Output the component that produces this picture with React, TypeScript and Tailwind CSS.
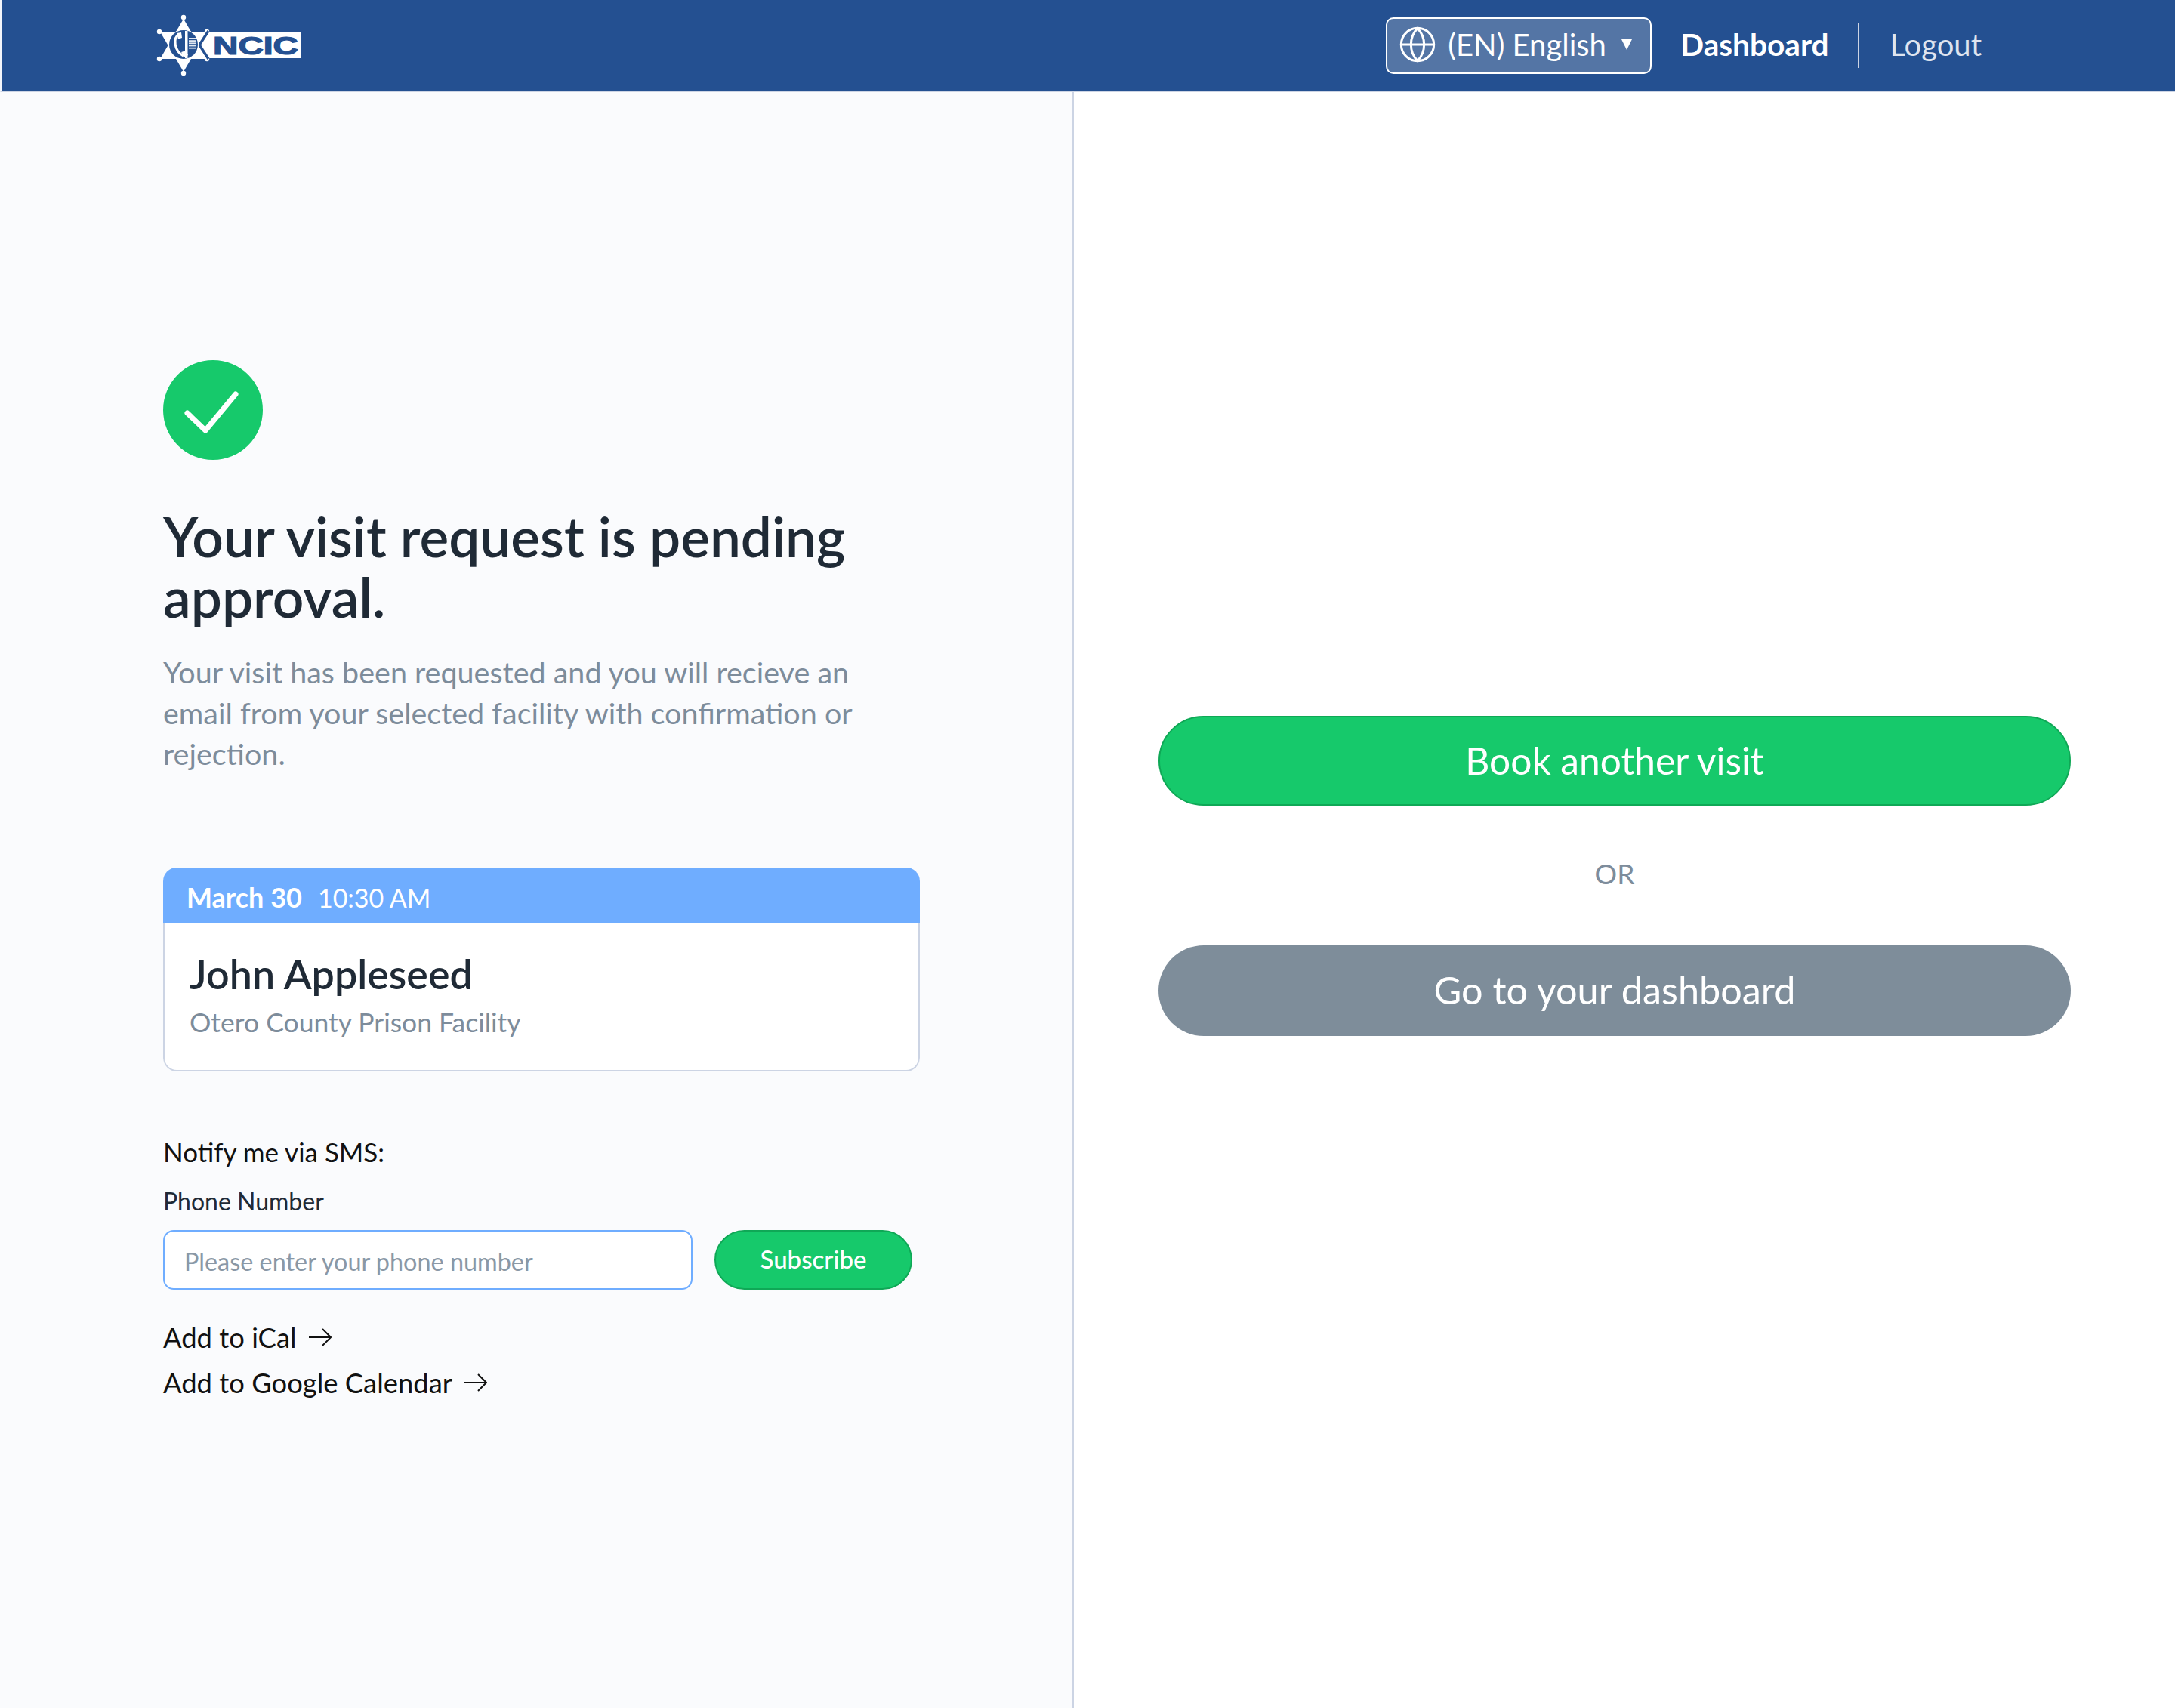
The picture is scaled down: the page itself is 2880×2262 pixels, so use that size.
import { Globe } from "lucide-react";

const NAVY = "#245091";

function Logo() {
  return (
    <svg width="200" height="90" viewBox="200 15 200 90" className="shrink-0">
      <polygon points="243,25 274,78 212,78" fill="#fff" />
      <polygon points="243,95 274,42 212,42" fill="#fff" />
      {[
        [243, 23],
        [243, 97],
        [211, 42],
        [274, 42],
        [211, 78],
        [274, 78],
      ].map(([cx, cy]) => (
        <circle key={`${cx}-${cy}`} cx={cx} cy={cy} r="3.2" fill="#fff" />
      ))}
      <polygon points="277,42 398,42 398,77 277,77 265,59.5" fill="#fff" />
      <polyline points="276,41 264,59.5 276,78" fill="none" stroke={NAVY} strokeWidth="3.5" />
      <circle cx="243" cy="59" r="20" fill="#fff" />
      <circle cx="243" cy="59" r="19" fill={NAVY} />
      <path d="M237 45 C229 50 230 67 243 74" fill="none" stroke="#fff" strokeWidth="3.2" />
      <path d="M234 44 L240 43 L241 50 L236 52 Z M240 69 L246 67 L249 73 L244 76 Z" fill="#fff" />
      <rect x="245" y="41" width="3.5" height="36" fill="#fff" />
      {[0, 1, 2, 3, 4].map((row) => (
        <rect key={row} x="250" y={50 + row * 3.2} width="10" height="1.8" fill="#dfe6f0" />
      ))}
      <text
        x="282"
        y="72"
        textLength="113"
        lengthAdjust="spacingAndGlyphs"
        fontFamily="'Liberation Sans', sans-serif"
        fontWeight="700"
        fontSize="33"
        fill={NAVY}
        stroke={NAVY}
        strokeWidth="1.2"
      >
        NCIC
      </text>
    </svg>
  );
}

function ArrowIcon() {
  return (
    <svg width="30" height="26" viewBox="0 0 30 26" fill="none" stroke="#111" strokeWidth="2" className="shrink-0">
      <path d="M0 13H28" />
      <path d="M18 2L29 13L18 24" />
    </svg>
  );
}

function CalendarLink({ label }: { label: string }) {
  return (
    <a className="flex h-[60px] items-center gap-[16px] text-[36.4px] text-[#111]">
      {label}
      <ArrowIcon />
    </a>
  );
}

export default function App() {
  return (
    <div className="flex min-h-[2262px] w-[2880px] flex-col bg-white font-['Lato',sans-serif]">
      <header className="flex h-[122px] shrink-0 items-center border-b-2 border-l-2 border-b-[#ccd4e4] border-l-[#f4f6fb] bg-[#245091] pr-[256px] pl-[198px]">
        <Logo />
        <div className="ml-auto flex items-center">
          <button className="flex h-[75px] w-[352px] items-center rounded-[10px] border-2 border-white bg-[#5475a5] pb-[2px] pl-[14px] text-[40px] text-white">
            <Globe size={52} strokeWidth={1.4} />
            <span className="ml-[14px]">(EN) English</span>
            <span className="ml-[20px] h-0 w-0 border-x-[7px] border-t-[14px] border-x-transparent border-t-white" />
          </button>
          <a className="ml-[38px] pb-[2px] text-[40.6px] font-bold text-white">Dashboard</a>
          <span className="mr-[41px] ml-[38px] h-[59px] w-[2px] bg-[#ccd4e4]" />
          <a className="pb-[2px] text-[40px] text-[#dfe4ef]">Logout</a>
        </div>
      </header>

      <main className="flex flex-1">
        <section className="w-[1422px] shrink-0 border-r-2 border-r-[#ccd4e4] bg-[#fafbfd] pt-[355px] pl-[216px]">
          <svg width="132" height="132" viewBox="0 0 132 132">
            <circle cx="66" cy="66" r="66" fill="#16c96b" />
            <path d="M32 70L56 93L96 45" fill="none" stroke="#fff" strokeWidth="7" strokeLinecap="round" strokeLinejoin="round" />
          </svg>

          <h1 className="mt-[61px] w-[1000px] text-[73px] leading-[80px] font-semibold text-[#1f2a36]">
            Your visit request is pending approval.
          </h1>
          <p className="mt-[33px] w-[960px] text-[39.5px] leading-[54px] text-[#7d8c9b]">
            Your visit has been requested and you will recieve an email from your selected facility with confirmation or rejection.
          </p>

          <div className="mt-[124px] w-[1002px] overflow-hidden rounded-[18px]">
            <div className="flex h-[74px] items-center gap-[21px] bg-[#6fadff] pt-[4px] pl-[31px] text-white">
              <span className="text-[36px] font-bold">March 30</span>
              <span className="text-[34px]">10:30 AM</span>
            </div>
            <div className="h-[196px] rounded-b-[18px] border-x-2 border-b-2 border-[#ccd4e4] bg-white pt-[36px] pl-[33px]">
              <div className="text-[53.8px] leading-[60px] font-semibold text-[#1f2a36]">John Appleseed</div>
              <div className="mt-[12px] text-[35.5px] leading-[46px] text-[#7d8c9b]">Otero County Prison Facility</div>
            </div>
          </div>

          <div className="mt-[85px] text-[35px] leading-[42px] text-[#111]">Notify me via SMS:</div>
          <label className="mt-[27px] block text-[32px] leading-[36px] text-[#1f2a36]">Phone Number</label>
          <div className="mt-[20px] flex items-center gap-[29px]">
            <input
              className="h-[79px] w-[701px] rounded-[14px] border-2 border-[#6fadff] bg-white px-[26px] pt-[4px] text-[32.4px] placeholder:text-[#8a98a6]"
              placeholder="Please enter your phone number"
            />
            <button className="h-[79px] w-[262px] rounded-full border-2 border-[#0fa856] bg-[#16c96b] pb-[2px] text-[33px] font-medium text-white">
              Subscribe
            </button>
          </div>
          <div className="mt-[33px]">
            <CalendarLink label="Add to iCal" />
            <CalendarLink label="Add to Google Calendar" />
          </div>
        </section>

        <section className="flex flex-1 flex-col pt-[826px] pr-[138px] pl-[112px]">
          <button className="h-[119px] rounded-full border-2 border-[#0fa856] bg-[#16c96b] text-[49.7px] text-white">
            Book another visit
          </button>
          <div className="flex h-[185px] items-center justify-center pb-[5px] text-[37px] text-[#7d8c9b]">OR</div>
          <button className="h-[120px] rounded-full bg-[#7e8d9a] pb-[2px] text-[50.4px] text-white">Go to your dashboard</button>
        </section>
      </main>
    </div>
  );
}
